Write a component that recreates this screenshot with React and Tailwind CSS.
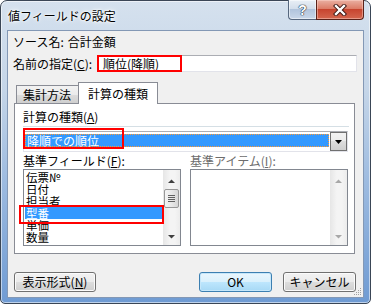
import React from "react";

function Tri({ up, color = "#3c3c3c" }) {
  return (
    <svg width="7" height="4" viewBox="0 0 7 4">
      {up ? (
        <polygon points="0,4 7,4 3.5,0.5" fill={color} />
      ) : (
        <polygon points="0,0 7,0 3.5,3.5" fill={color} />
      )}
    </svg>
  );
}

function ScrollBar({ disabled }) {
  const c = disabled ? "#a8a8a8" : "#404040";
  return (
    <div className="w-[17px] h-full flex flex-col bg-[linear-gradient(to_right,#e6e6e6,#f4f4f4_40%,#f4f4f4_70%,#ececec)]">
      <div className="h-[17px] flex justify-center items-start pt-[9px]">
        <Tri up color={c} />
      </div>
      {!disabled && (
        <div className="mt-[2px] mx-[1px] h-[19px] rounded-[2px] border border-[#979797] bg-[linear-gradient(to_right,#f4f4f4,#e8e8e8_50%,#d6d6d6)] flex flex-col items-center justify-center gap-[1px]">
          <div className="w-[7px] h-[1px] bg-[#606060]" />
          <div className="w-[7px] h-[1px] bg-[#606060]" />
          <div className="w-[7px] h-[1px] bg-[#606060]" />
          <div className="w-[7px] h-[1px] bg-[#606060]" />
        </div>
      )}
      <div className="flex-1" />
      <div className="h-[17px] flex justify-center items-start pt-[7px]">
        <Tri color={c} />
      </div>
    </div>
  );
}

function Btn({ children, className = "", def }) {
  return (
    <div
      className={
        "h-[20px] rounded-[3px] border flex items-center justify-center leading-none " +
        (def
          ? "border-[#3c7fb1] bg-[linear-gradient(to_bottom,#eaf6fd,#d9f0fc_50%,#bee6fd_50%,#a7d9f5)] shadow-[inset_0_0_0_1px_#c6e7fa] "
          : "border-[#707070] bg-[linear-gradient(to_bottom,#f2f2f2,#ebebeb_50%,#dddddd_50%,#cfcfcf)] shadow-[inset_0_0_0_1px_#fbfbfb] ") +
        className
      }
    >
      {children}
    </div>
  );
}

export default function App() {
  const items = ["伝票№", "日付", "担当者", "型番", "単価", "数量"];
  return (
    <div className="w-[371px] h-[306px] bg-white text-[12px] text-black font-[family-name:'Noto_Sans_CJK_JP',sans-serif]">
      <div className="w-[371px] h-[304px] flex flex-col border border-[#3a4656] rounded-t-[7px] rounded-b-[5px] px-[6px] pb-[5px] bg-[linear-gradient(to_bottom,#d5e1ee_0%,#c4d5e8_30%,#9dbbe0_60%,#6f9bd3_100%)] shadow-[inset_0_0_0_1px_rgba(255,255,255,0.55)]">
        {/* title bar */}
        <div className="h-[29px] flex justify-between items-start">
          <div className="pl-[1px] pt-[8px] leading-[14px] [text-shadow:0_0_6px_#fff,0_0_3px_#fff,0_0_2px_#fff]">
            値フィールドの設定
          </div>
          <div className="flex -mt-[1px]">
            <div className="w-[28px] h-[20px] rounded-bl-[4px] border border-t-0 border-r-0 border-[#56677e] bg-[linear-gradient(to_bottom,#e9eff6,#d3deeb_45%,#b1c4dc_50%,#c9d7e9)] shadow-[inset_0_0_0_1px_rgba(255,255,255,0.5)] flex items-center justify-center">
              <span className="font-[family-name:'Liberation_Sans',sans-serif] font-bold text-[14px] leading-none text-white [text-shadow:0_0_1px_#1e2a3a,0_0_1px_#1e2a3a,0_0_1px_#1e2a3a]">
                ?
              </span>
            </div>
            <div className="w-[48px] h-[20px] rounded-br-[4px] border border-t-0 border-[#5a2219] bg-[linear-gradient(to_bottom,#eab0a2,#dc7d68_45%,#c7452f_50%,#d4664e)] shadow-[inset_0_0_0_1px_rgba(255,220,210,0.45)] flex items-center justify-center">
              <svg width="14" height="12" viewBox="0 0 14 12">
                <path d="M3 2 L11 10 M11 2 L3 10" stroke="#3a1410" strokeWidth="4.2" strokeLinecap="square" />
                <path d="M3 2 L11 10 M11 2 L3 10" stroke="#ffffff" strokeWidth="2.4" strokeLinecap="square" />
              </svg>
            </div>
          </div>
        </div>

        {/* client area */}
        <div className="flex-1 relative bg-[#f0f0f0] border border-[#8398b5] flex flex-col">
          <div className="h-[16px] mt-[3px] pl-[5px] flex items-center leading-none">
            <span>ソース名:</span>
            <span className="ml-[4px]">合計金額</span>
          </div>

          <div className="h-[17px] mt-[5px] flex items-center">
            <div className="w-[89px] pl-[5px] leading-none">
              名前の指定(<span className="underline">C</span>):
            </div>
            <div className="relative w-[260px] h-[17px] bg-white border border-[#e2e3ea] border-t-[#abadb3] flex items-center pl-[5px] leading-none">
              順位(降順)
              <div className="absolute -left-[1px] -top-[1px] w-[85px] h-[17px] border-2 border-[#ff0000]" />
            </div>
          </div>

          {/* tabs */}
          <div className="h-[21px] mt-[10px] ml-[8px] flex items-end">
            <div className="w-[63px] h-[18px] border border-b-0 border-[#898c95] bg-[linear-gradient(to_bottom,#f2f2f2,#ebebeb_50%,#dddddd_50%,#cfcfcf)] flex items-center pl-[6px] leading-none">
              集計方法
            </div>
            <div className="w-[80px] h-[22px] -ml-[1px] -mb-[1px] relative z-10 border border-b-0 border-[#898c95] bg-white flex items-center pl-[9px] leading-none">
              計算の種類
            </div>
          </div>

          {/* tab panel */}
          <div className="ml-[6px] mr-[8px] h-[151px] border border-[#898c95] bg-white flex flex-col pl-[8px]">
            <div className="h-[16px] mt-[5px] flex items-center leading-none">
              計算の種類(<span className="underline">A</span>)
            </div>
            <div className="mt-[1px] h-[1px] w-[326px] bg-[#d5dfe5]" />
            <div className="relative mt-[4px] w-[325px] h-[21px] bg-white border border-[#e2e3ea] border-t-[#abadb3] flex">
              <div className="flex-1 ml-[1px] mr-[1px] h-[13px] mt-[2px] bg-[#3399ff] border border-dotted border-[#ff9a33] flex items-center pl-[1px] text-white leading-none">
                降順での順位
              </div>
              <div className="w-[17px] h-[19px] border border-[#707070] bg-[linear-gradient(to_bottom,#f2f2f2,#ebebeb_50%,#dddddd_50%,#cfcfcf)] flex items-center justify-center">
                <svg width="7" height="4" viewBox="0 0 7 4">
                  <polygon points="0,0 7,0 3.5,4" fill="#000" />
                </svg>
              </div>
              <div className="absolute -left-[1px] -top-[4px] w-[101px] h-[21px] border-2 border-[#ff0000]" />
            </div>

            <div className="h-[16px] mt-[1px] flex gap-[9px] leading-none">
              <div className="w-[158px] flex items-center">
                基準フィールド(<span className="underline">F</span>):
              </div>
              <div className="w-[158px] flex items-center text-[#6d6d6d]">
                基準アイテム(<span className="underline">I</span>):
              </div>
            </div>

            <div className="h-[77px] flex gap-[9px]">
              <div className="relative w-[158px] h-[77px] border border-[#828790] bg-white flex">
                <div className="flex-1 pt-[1px] flex flex-col text-[11.5px]">
                  {items.map((t) => (
                    <div
                      key={t}
                      className={
                        "h-[12px] shrink-0 ml-[1px] pl-[1px] flex items-center leading-[12px] " +
                        (t === "型番" ? "bg-[#3399ff] text-white" : "")
                      }
                    >
                      {t}
                    </div>
                  ))}
                </div>
                <ScrollBar />
                <div className="absolute -left-[5px] top-[35px] w-[145px] h-[19px] border-2 border-[#ff0000]" />
              </div>
              <div className="w-[158px] h-[77px] border border-[#828790] bg-white flex">
                <div className="flex-1" />
                <ScrollBar disabled />
              </div>
            </div>
          </div>

          {/* buttons */}
          <div className="h-[20px] mt-[18px] ml-[6px] mr-[7px] flex">
            <Btn className="w-[82px]">
              表示形式(<span className="underline">N</span>)
            </Btn>
            <div className="flex-1" />
            <Btn def className="w-[73px]">
              OK
            </Btn>
            <Btn className="w-[73px] ml-[11px]">キャンセル</Btn>
          </div>

          <svg className="absolute right-[1px] bottom-[1px]" width="9" height="9" viewBox="0 0 9 9">
            <rect x="7" y="1" width="1" height="1" fill="#a0a0a0" />
            <rect x="5" y="3" width="1" height="1" fill="#a0a0a0" />
            <rect x="7" y="3" width="1" height="1" fill="#a0a0a0" />
            <rect x="3" y="5" width="1" height="1" fill="#a0a0a0" />
            <rect x="5" y="5" width="1" height="1" fill="#a0a0a0" />
            <rect x="7" y="5" width="1" height="1" fill="#a0a0a0" />
            <rect x="1" y="7" width="1" height="1" fill="#a0a0a0" />
            <rect x="3" y="7" width="1" height="1" fill="#a0a0a0" />
            <rect x="5" y="7" width="1" height="1" fill="#a0a0a0" />
            <rect x="7" y="7" width="1" height="1" fill="#a0a0a0" />
          </svg>
        </div>
      </div>
    </div>
  );
}
